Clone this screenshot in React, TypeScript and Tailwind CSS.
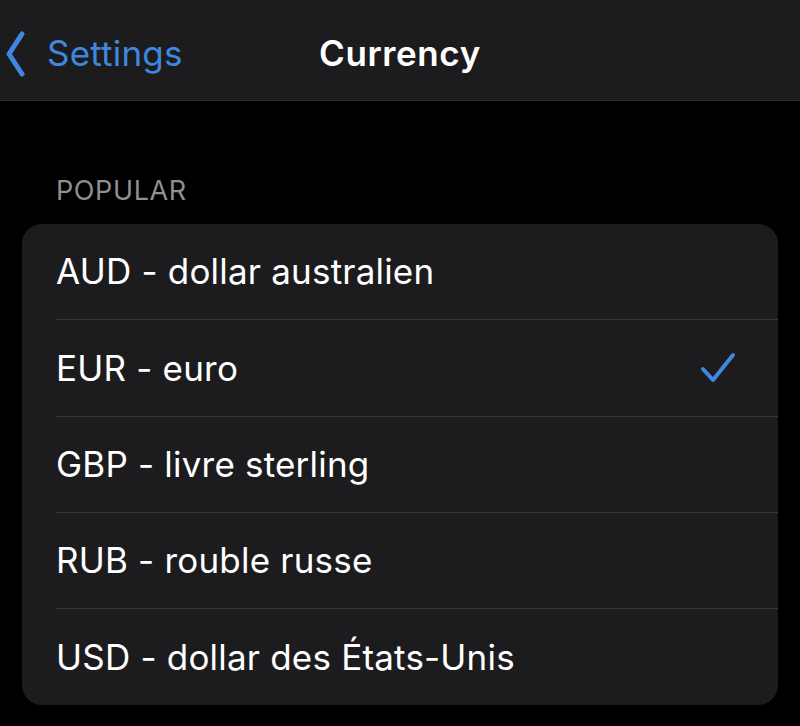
import React from 'react';

const currencies = [
  { code: 'AUD', name: 'dollar australien' },
  { code: 'EUR', name: 'euro', selected: true },
  { code: 'GBP', name: 'livre sterling' },
  { code: 'RUB', name: 'rouble russe' },
  { code: 'USD', name: 'dollar des États-Unis' },
];

export default function App() {
  return (
    <div className="w-[800px] h-[726px] bg-black text-white overflow-hidden" style={{ fontFamily: 'Inter, "Noto Sans", sans-serif' }}>
      {/* Nav bar */}
      <div className="relative h-[101px] bg-[#1c1c1e] border-b border-[#2c2c2e] flex items-center pt-[7px]">
        <button className="flex items-center gap-[22px] pl-[6px] text-[#3f87df]">
          <svg width="19" height="46" viewBox="0 0 19 46" fill="none">
            <path d="M16 3 L3 23 L16 43" stroke="currentColor" strokeWidth="5" strokeLinecap="round" strokeLinejoin="round" />
          </svg>
          <span className="text-[35px] tracking-[0.2px]">Settings</span>
        </button>
        <div className="absolute inset-x-0 top-0 h-full flex items-center justify-center pointer-events-none pt-[7px]">
          <span className="text-[35px] font-semibold tracking-[0.6px]">Currency</span>
        </div>
      </div>

      {/* Section */}
      <div className="pt-[73px] px-[22px]">
        <div className="pl-[34px] pb-[16px] text-[27px] tracking-[0.6px] text-[#8e8e93] leading-[34px]">POPULAR</div>
        <div className="w-[756px] bg-[#1c1c1e] rounded-[20px] overflow-hidden">
          {currencies.map((c, i) => (
            <div key={c.code} className="pl-[34px]">
              <div className={`h-[96.3px] flex items-center justify-between pr-[42px] ${i < currencies.length - 1 ? 'border-b border-[#38383a]' : ''}`}>
                <span className="text-[35px] tracking-[0.2px]">{c.code} - {c.name}</span>
                {c.selected && (
                  <svg width="36" height="32" viewBox="0 0 36 32" fill="none" className="text-[#3f87df]">
                    <path d="M3 17 L13 28 L33 3" stroke="currentColor" strokeWidth="4" strokeLinecap="round" strokeLinejoin="round" />
                  </svg>
                )}
              </div>
            </div>
          ))}
        </div>
      </div>
    </div>
  );
}
